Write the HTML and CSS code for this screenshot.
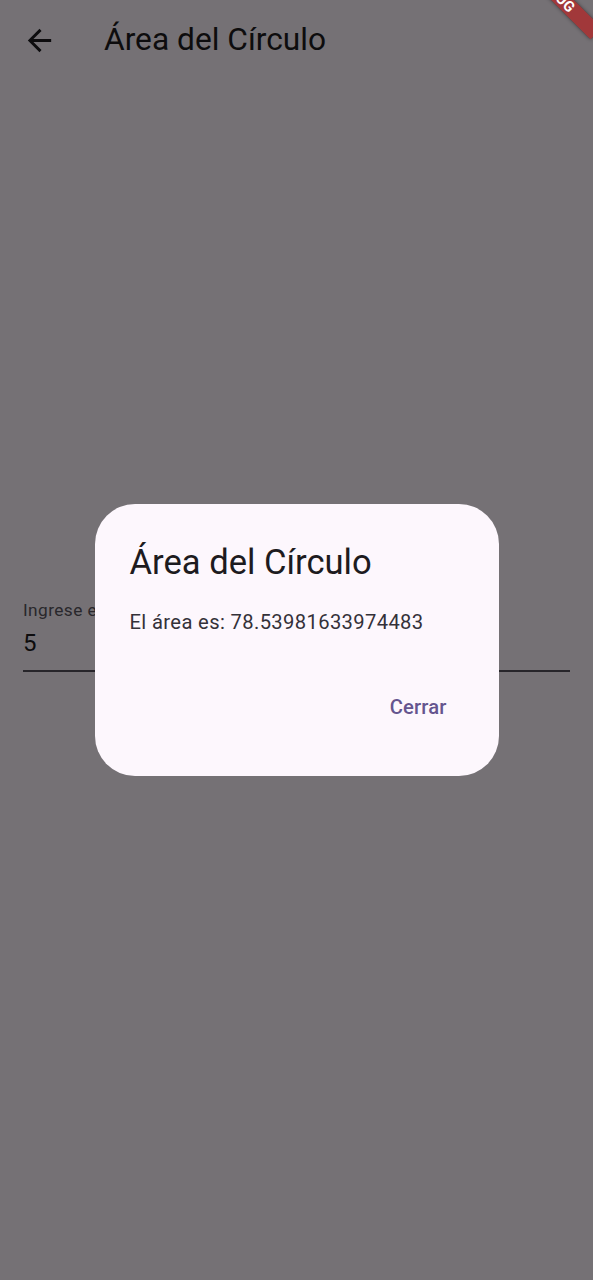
FILE: index.html
```html
<!DOCTYPE html>
<html lang="es">
<head>
<meta charset="utf-8">
<title>Área del Círculo</title>
<link rel="stylesheet" href="styles.css">
</head>
<body>
<div class="app">
  <header class="appbar">
    <button class="back" aria-label="Atrás">
      <svg viewBox="0 0 24 24" width="35" height="35"><path d="M20 11H7.83l5.59-5.59L12 4l-8 8 8 8 1.41-1.41L7.83 13H20v-2z" fill="currentColor"/></svg>
    </button>
    <h1 class="title">Área del Círculo</h1>
  </header>
  <main class="content">
    <div class="field">
      <label class="field-label">Ingrese el radio</label>
      <div class="field-value">5</div>
    </div>
  </main>
</div>

<div class="scrim">
  <div class="dialog" role="dialog">
    <h2 class="dialog-title">Área del Círculo</h2>
    <p class="dialog-body">El área es: 78.53981633974483</p>
    <div class="dialog-actions">
      <button class="text-btn">Cerrar</button>
    </div>
  </div>
</div>

<div class="debug-banner">DEBUG</div>
</body>
</html>
```
FILE: styles.css
```css
html, body {
  margin: 0;
  padding: 0;
  height: 100%;
  overflow: hidden;
}
body {
  background: #fef7ff;
  font-family: Roboto, "Noto Sans", sans-serif;
  color: #1d1b20;
  position: relative;
}
.app {
  display: flex;
  flex-direction: column;
  height: 100%;
}
.appbar {
  height: 80px;
  display: flex;
  align-items: center;
  padding-left: 22px;
  flex-shrink: 0;
}
.back {
  background: none;
  border: 0;
  padding: 0;
  width: 35px;
  height: 35px;
  color: #1d1b20;
  display: flex;
}
.title {
  margin: 0 0 0 47px;
  font-size: 31.7px;
  font-weight: 400;
  line-height: 40px;
  color: #1d1b20;
}
.content {
  padding: 0 23px;
  flex: 1;
}
.field {
  margin-top: 519px;
  border-bottom: 2px solid #56525c;
  padding-bottom: 11px;
}
.field-label {
  display: block;
  font-size: 17.3px;
  line-height: 22px;
  color: #5a5660;
  letter-spacing: 0.4px;
}
.field-value {
  font-size: 24px;
  line-height: 32px;
  margin-top: 6px;
  color: #1d1b20;
}
.scrim {
  position: absolute;
  inset: 0;
  background: rgba(0, 0, 0, 0.54);
  display: flex;
  align-items: center;
  justify-content: center;
}
.dialog {
  width: 404px;
  box-sizing: border-box;
  background: #fdf7fd;
  border-radius: 40px;
  padding: 35px 0 35px 0;
}
.dialog-title {
  margin: 0;
  padding: 0 35px;
  font-size: 34.6px;
  line-height: 46px;
  font-weight: 400;
  color: #1d1b20;
}
.dialog-body {
  margin: 23px 0 0 0;
  padding: 0 35px;
  font-size: 20.2px;
  line-height: 29px;
  letter-spacing: 0.36px;
  color: #343139;
}
.dialog-actions {
  display: flex;
  justify-content: flex-end;
  padding: 35px 35px 0 35px;
}
.text-btn {
  background: none;
  border: 0;
  height: 69px;
  padding: 0 17px;
  font-family: Roboto, "Noto Sans", sans-serif;
  font-size: 20.2px;
  font-weight: 500;
  letter-spacing: 0.14px;
  color: #65558f;
}
.debug-banner {
  position: absolute;
  left: 498px;
  top: -15px;
  width: 115px;
  height: 16px;
  line-height: 16px;
  transform: rotate(45deg);
  background: rgba(183, 28, 28, 0.66);
  box-shadow: 0 0 4px rgba(0, 0, 0, 0.5);
  color: #fff;
  font-family: Roboto, sans-serif;
  font-weight: 700;
  font-size: 14.7px;
  text-align: center;
  letter-spacing: 0.3px;
}
```
